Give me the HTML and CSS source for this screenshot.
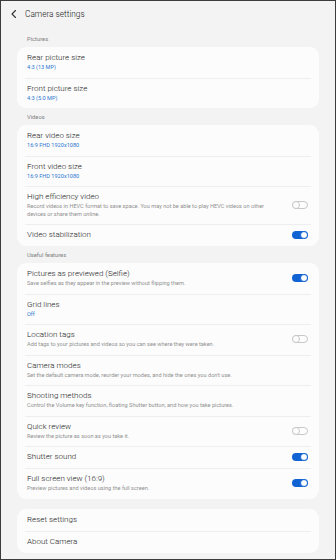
FILE: index.html
```html
<!DOCTYPE html>
<html>
<head>
<meta charset="utf-8">
<link rel="stylesheet" href="styles.css">
</head>
<body>
<div class="screen">
  <div class="header">
    <svg class="back" width="8" height="10" viewBox="0 0 8 10"><path d="M5.5 1.5 L2 5 L5.5 8.5" fill="none" stroke="#333" stroke-width="1.1" stroke-linecap="round" stroke-linejoin="round"/></svg>
    <span class="title">Camera settings</span>
  </div>

  <div class="group-label first">Pictures</div>
  <div class="card">
    <div class="row"><div class="text"><div class="name">Rear picture size</div><div class="sub">4:3 (13 MP)</div></div></div>
    <div class="row"><div class="text"><div class="name">Front picture size</div><div class="sub">4:3 (5.0 MP)</div></div></div>
  </div>

  <div class="group-label">Videos</div>
  <div class="card">
    <div class="row"><div class="text"><div class="name">Rear video size</div><div class="sub">16:9 FHD 1920x1080</div></div></div>
    <div class="row"><div class="text"><div class="name">Front video size</div><div class="sub">16:9 FHD 1920x1080</div></div></div>
    <div class="row"><div class="text"><div class="name">High efficiency video</div><div class="desc">Record videos in HEVC format to save space. You may not be able to play HEVC videos on other devices or share them online.</div></div><span class="toggle off"></span></div>
    <div class="row"><div class="text"><div class="name">Video stabilization</div></div><span class="toggle on"></span></div>
  </div>

  <div class="group-label">Useful features</div>
  <div class="card">
    <div class="row"><div class="text"><div class="name">Pictures as previewed (Selfie)</div><div class="desc">Save selfies as they appear in the preview without flipping them.</div></div><span class="toggle on"></span></div>
    <div class="row"><div class="text"><div class="name">Grid lines</div><div class="sub">Off</div></div></div>
    <div class="row"><div class="text"><div class="name">Location tags</div><div class="desc">Add tags to your pictures and videos so you can see where they were taken.</div></div><span class="toggle off"></span></div>
    <div class="row"><div class="text"><div class="name">Camera modes</div><div class="desc">Set the default camera mode, reorder your modes, and hide the ones you don't use.</div></div></div>
    <div class="row"><div class="text"><div class="name">Shooting methods</div><div class="desc">Control the Volume key function, floating Shutter button, and how you take pictures.</div></div></div>
    <div class="row"><div class="text"><div class="name">Quick review</div><div class="desc">Review the picture as soon as you take it.</div></div><span class="toggle off"></span></div>
    <div class="row"><div class="text"><div class="name">Shutter sound</div></div><span class="toggle on"></span></div>
    <div class="row"><div class="text"><div class="name">Full screen view (16:9)</div><div class="desc">Preview pictures and videos using the full screen.</div></div><span class="toggle on"></span></div>
  </div>

  <div class="card last">
    <div class="row"><div class="text"><div class="name">Reset settings</div></div></div>
    <div class="row"><div class="text"><div class="name">About Camera</div></div></div>
  </div>
</div>
</body>
</html>
```
FILE: styles.css
```css
html, body {
  margin: 0;
  padding: 0;
}
body {
  font-family: Roboto, "Noto Sans", Arial, sans-serif;
  color: #1e1e1e;
}
.screen {
  width: 336px;
  height: 560px;
  box-sizing: border-box;
  border: 1px solid #3c3c3c;
  background: #f3f3f3;
  overflow: hidden;
}
.header {
  display: flex;
  align-items: center;
  height: 25px;
  padding-left: 9px;
}
.back {
  display: block;
}
.title {
  margin-left: 7px;
  font-size: 8.3px;
  font-weight: 300;
  line-height: 10px;
  color: #1a1a1a;
}
.group-label {
  font-size: 5.8px;
  line-height: 8px;
  color: #808080;
  padding: 5px 26px 4px;
}
.group-label.first {
  padding-top: 9px;
}
.card {
  margin: 0 16px;
  background: #fcfcfc;
  border-radius: 9px;
}
.card.last {
  margin-top: 10px;
}
.row {
  display: flex;
  align-items: center;
  margin: 0 8px;
  padding: 6px 3px 6px 2px;
}
.row + .row {
  border-top: 1px solid #eeeeee;
  padding-top: 5px;
}
.text {
  flex: 1;
  min-width: 0;
}
.name {
  font-size: 8px;
  font-weight: 300;
  line-height: 10px;
  color: #1a1a1a;
}
.sub {
  font-size: 5.6px;
  line-height: 7.5px;
  margin-top: 1px;
  color: #2b77d0;
}
.desc {
  font-size: 5.6px;
  line-height: 7.5px;
  margin-top: 1px;
  color: #909090;
  padding-right: 16px;
}
.toggle {
  flex: none;
  width: 16px;
  height: 8px;
  border-radius: 4px;
  box-sizing: border-box;
  margin-left: 4px;
  display: flex;
  align-items: center;
}
.toggle::after {
  content: "";
  width: 8px;
  height: 8px;
  border-radius: 50%;
  box-sizing: border-box;
  background: #ffffff;
}
.toggle.on {
  background: #1163d3;
  justify-content: flex-end;
}
.toggle.on::after {
  border: 1.2px solid #1163d3;
}
.toggle.off {
  border: 1px solid #c8c8c8;
  background: #fdfdfd;
  justify-content: flex-start;
}
.toggle.off::after {
  margin-left: -1px;
  border: 1px solid #c8c8c8;
}
```
